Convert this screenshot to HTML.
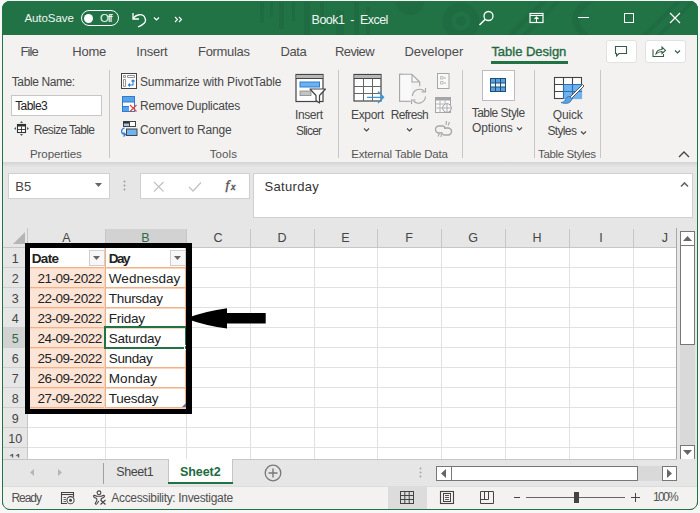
<!DOCTYPE html>
<html><head><meta charset="utf-8">
<style>
*{margin:0;padding:0;box-sizing:border-box}
html,body{width:700px;height:513px;overflow:hidden;background:#f7f7f7;font-family:"Liberation Sans",sans-serif}
.a{position:absolute}
.t{position:absolute;white-space:pre;font-family:"Liberation Sans",sans-serif}
#win{position:absolute;left:2px;top:1px;width:696px;height:509px;border-radius:8px;overflow:hidden;background:#f3f2f1;border:1px solid #217346}
svg{position:absolute;overflow:visible}
</style></head><body>
<div id="win"></div>
<!-- title bar -->
<div class="a" style="left:2px;top:1px;width:696px;height:34px;background:#217346;border-radius:8px 8px 0 0;overflow:hidden">
<svg width="696" height="34" style="left:0;top:0">
 <g fill="#1f6c42">
  <rect x="258" y="0" width="4" height="22"/><rect x="268" y="0" width="3" height="16"/><rect x="277" y="0" width="5" height="28"/>
  <rect x="290" y="0" width="3" height="20"/><rect x="302" y="0" width="6" height="34"/><rect x="318" y="0" width="4" height="26"/>
  <rect x="334" y="10" width="8" height="24"/><rect x="352" y="0" width="5" height="34"/><rect x="364" y="6" width="4" height="28"/>
  <circle cx="408" cy="0" r="14"/>
  <circle cx="459" cy="20" r="14" fill="none" stroke="#1f6c42" stroke-width="9"/>
  <circle cx="459" cy="20" r="5"/>
  <path d="M505 34 L545 -6 L552 -6 L512 34Z"/><path d="M520 34 L560 -6 L565 -6 L525 34Z"/>
  <path d="M640 34 L680 -6 L686 -6 L646 34Z"/><path d="M655 34 L695 -6 L700 -6 L660 34Z"/>
  <path d="M590 -2 Q560 16 585 36" fill="none" stroke="#1f6c42" stroke-width="7"/>
 </g>
</svg>
</div>
<!-- toggle -->
<div class="a" style="left:81px;top:10px;width:38px;height:16px;border:1.3px solid #fff;border-radius:8px"></div>
<div class="a" style="left:84px;top:14px;width:9px;height:9px;background:#fff;border-radius:50%"></div>
<!-- undo icon -->
<svg width="20" height="20" style="left:130px;top:9px"><path d="M3 4 L3 10 L9 10 M3 10 C6 5 13 4 15 9 C17 13 13 16 8 18" fill="none" stroke="#fff" stroke-width="1.3"/></svg>
<svg width="8" height="6" style="left:153px;top:16px"><path d="M1 1.5 L3.5 4 L6 1.5" fill="none" stroke="#fff" stroke-width="1.2"/></svg>
<svg width="10" height="8" style="left:174px;top:16px"><path d="M1 1 L3.5 3.5 L1 6 M5 1 L7.5 3.5 L5 6" fill="none" stroke="#fff" stroke-width="1.1"/></svg>
<!-- search -->
<svg width="18" height="18" style="left:478px;top:10px"><circle cx="10.5" cy="6" r="4.5" fill="none" stroke="#fff" stroke-width="1.3"/><path d="M7.3 9.2 L1.5 15" stroke="#fff" stroke-width="1.5"/></svg>
<!-- ribbon display -->
<svg width="16" height="12" style="left:529px;top:12px"><rect x="1" y="1.5" width="13" height="9" fill="none" stroke="#fff" stroke-width="1.2"/><path d="M1 3.5 H14 M7.5 10 V5 M5.5 7 L7.5 5 L9.5 7" fill="none" stroke="#fff" stroke-width="1.1"/></svg>
<div class="a" style="left:578px;top:17px;width:11px;height:1.2px;background:#fff"></div>
<div class="a" style="left:624px;top:13px;width:10px;height:10px;border:1.2px solid #fff"></div>
<svg width="12" height="12" style="left:669px;top:12px"><path d="M1 1 L11 11 M11 1 L1 11" stroke="#fff" stroke-width="1.2"/></svg>

<!-- tab underline -->
<div class="a" style="left:491px;top:61px;width:77px;height:3px;background:#217346"></div>
<!-- comment & share buttons -->
<div class="a" style="left:606px;top:40px;width:31px;height:23px;background:#fff;border:1px solid #e1e1e1;border-radius:3px"></div>
<svg width="14" height="12" style="left:614px;top:45px"><path d="M1.5 1.5 H12.5 V8.5 H5 L2.5 11 V8.5 H1.5 Z" fill="none" stroke="#3a5a48" stroke-width="1.1"/></svg>
<div class="a" style="left:645px;top:40px;width:41px;height:23px;background:#fff;border:1px solid #e1e1e1;border-radius:3px"></div>
<svg width="16" height="14" style="left:652px;top:45px"><path d="M1 4.5 V11.5 H11.5 V9" fill="none" stroke="#3a5a48" stroke-width="1.1"/><path d="M4 9 C4.5 6 7 4.5 10 4.5 V2 L13.5 5.5 L10 8.5 V6.5 C7.5 6.5 5.5 7.5 4 9 Z" fill="none" stroke="#3a5a48" stroke-width="1.05"/></svg>
<svg width="8" height="6" style="left:674px;top:49px"><path d="M1 1.5 L3.5 4 L6 1.5" fill="none" stroke="#3a5a48" stroke-width="1.2"/></svg>

<!-- ribbon separators -->
<div class="a" style="left:109px;top:70px;width:1px;height:88px;background:#c8c8c8"></div>
<div class="a" style="left:338px;top:70px;width:1px;height:88px;background:#c8c8c8"></div>
<div class="a" style="left:462px;top:70px;width:1px;height:88px;background:#c8c8c8"></div>
<div class="a" style="left:534px;top:70px;width:1px;height:88px;background:#c8c8c8"></div>
<div class="a" style="left:600px;top:70px;width:1px;height:88px;background:#c8c8c8"></div>
<!-- table name input -->
<div class="a" style="left:11px;top:95px;width:91px;height:21px;background:#fff;border:1px solid #c6c6c6"></div>
<!-- resize table icon -->
<svg width="18" height="18" style="left:12px;top:119px"><rect x="5.5" y="5.5" width="8" height="8" fill="#fff" stroke="#333" stroke-width="1.1"/><rect x="5.5" y="5.5" width="8" height="2" fill="#333"/><path d="M5.5 10.5 H13.5 M9.5 7.5 V13.5" stroke="#333" stroke-width="0.9"/><path d="M9.5 2 L8 4 H11Z M9.5 17 L8 15 H11Z M2 9.5 L4 8 V11Z M17 9.5 L15 8 V11Z" fill="#3d5f80"/></svg>
<!-- summarize icon -->
<svg width="17" height="17" style="left:121px;top:73px"><rect x="0.5" y="0.5" width="15" height="15" fill="#fff" stroke="#444" stroke-width="1"/><path d="M2.5 2.5 H4.5 V4.5 H2.5Z M6.5 2.5 H13.5 V4.5 H6.5Z M2.5 6.5 H4.5 V13.5 H2.5Z" fill="#fff" stroke="#8a8a8a" stroke-width="0.9"/><path d="M12 7 V12 H7.5 M9 10.5 L7.5 12 L9 13.5 M10.5 8.5 L12 7 L13.5 8.5" fill="none" stroke="#2b7cd3" stroke-width="1.1"/></svg>
<!-- remove duplicates icon -->
<svg width="17" height="17" style="left:121px;top:96px"><rect x="1.5" y="0.5" width="12" height="15" fill="#fff" stroke="#2b7cd3" stroke-width="1"/><rect x="2" y="1" width="11" height="5" fill="#5aa3e6"/><rect x="2" y="11" width="6" height="4" fill="#5aa3e6"/><path d="M1.5 6 H13.5 M1.5 10.5 H8" stroke="#2b7cd3" stroke-width="1"/><path d="M9 9 L15.5 15.5 M15.5 9 L9 15.5" stroke="#e0463a" stroke-width="1.2"/></svg>
<!-- convert to range icon -->
<svg width="18" height="17" style="left:120px;top:120px"><rect x="3.5" y="1.5" width="6" height="5" fill="#9cc8f0" stroke="#444" stroke-width="1"/><rect x="3.5" y="1.5" width="6" height="2" fill="#2f2f2f"/><rect x="9.5" y="1.5" width="6" height="5" fill="#fff" stroke="#444" stroke-width="1"/><rect x="6.5" y="9" width="10.5" height="6.5" fill="#6fb3f0" stroke="#444" stroke-width="1"/><path d="M4.5 8 C0.5 9 0.5 14 5 14.5 M3.5 12.5 L5.5 14.5 L3.5 16.5" fill="none" stroke="#2b7cd3" stroke-width="1.2"/></svg>
<!-- insert slicer icon -->
<svg width="34" height="34" style="left:294px;top:72px"><rect x="2" y="2.5" width="27" height="27" fill="#fff" stroke="#444" stroke-width="1.2"/><rect x="2.6" y="3" width="25.8" height="3.6" fill="#b8b8b8"/><path d="M2 6.5 H29" stroke="#444" stroke-width="1"/><rect x="6" y="10" width="19.5" height="5" fill="#6cb2f0" stroke="#2b7cd3" stroke-width="1"/><rect x="6" y="19" width="11" height="4.6" fill="#c4c4c4" stroke="#888" stroke-width="0.8"/><path d="M16 17 H31.5 L25.5 23.5 V31 L22 28.5 V23.5 Z" fill="#fff" stroke="#444" stroke-width="1.2" stroke-linejoin="round"/></svg>
<!-- export icon -->
<svg width="34" height="34" style="left:352px;top:72px"><rect x="2" y="2.5" width="27" height="26.5" fill="#fff" stroke="#444" stroke-width="1.2"/><rect x="2.6" y="3" width="25.8" height="3.6" fill="#b8b8b8"/><path d="M2 6.5 H29" stroke="#444" stroke-width="1"/><path d="M2 14.5 H29 M2 21.5 H29 M11.5 6.5 V29 M20.5 6.5 V29" stroke="#666" stroke-width="1"/><path d="M15 25.3 H31 M26 19.5 L31.6 25.3 L26 31" fill="none" stroke="#3a96d9" stroke-width="1.3"/></svg>
<svg width="8" height="6" style="left:363px;top:127px"><path d="M1 1.5 L3.5 4 L6 1.5" fill="none" stroke="#444" stroke-width="1.1"/></svg>
<!-- refresh icon (disabled) -->
<svg width="32" height="32" style="left:394px;top:70px"><path d="M16 16.5 V12 L8.2 4.3 H5.6 V31.3 H16.3" fill="#f9f9f9" stroke="#a6a6a6" stroke-width="1.1"/><path d="M18 4.3 H5.6 V31.3 H16.3 M18 4.3 L25.7 12 V16.3 M18 4.3 V12 H25.7" fill="#f9f9f9" stroke="#a6a6a6" stroke-width="1.1"/><path d="M18.5 26.1 A7 7 0 0 1 30.5 21.5 M31.5 26.5 A7 7 0 0 1 19.5 31" fill="none" stroke="#a6a6a6" stroke-width="1.1"/><path d="M31.5 18 V22 H27.5 M17.5 34 V30 H21.5" fill="none" stroke="#a6a6a6" stroke-width="1.1"/></svg>
<svg width="8" height="6" style="left:406px;top:127px"><path d="M1 1.5 L3.5 4 L6 1.5" fill="none" stroke="#444" stroke-width="1.1"/></svg>
<!-- small disabled icons -->
<svg width="14" height="17" style="left:437px;top:73px"><rect x="0.5" y="0.5" width="11.5" height="15" fill="#f9f9f9" stroke="#a6a6a6"/><path d="M3.5 3.5 H6 V6 H3.5Z M3.5 8.5 H6 V11 H3.5Z" fill="none" stroke="#b0b0b0" stroke-width="0.8"/><path d="M6.5 5 H9 M6.5 10 H9" stroke="#b0b0b0"/></svg>
<svg width="18" height="17" style="left:435px;top:97px"><rect x="0.5" y="0.5" width="15" height="15" fill="#f9f9f9" stroke="#a6a6a6"/><rect x="0.5" y="0.5" width="15" height="3" fill="#a6a6a6"/><path d="M0.5 7 H9 M0.5 11 H8 M5 3.5 V15.5 M10 3.5 V7" stroke="#b5b5b5"/><circle cx="12" cy="11" r="4.3" fill="#f9f9f9" stroke="#a0a0a0"/><path d="M7.7 11 H16.3 M12 6.7 V15.3" stroke="#a0a0a0" stroke-width="0.8"/></svg>
<svg width="18" height="17" style="left:435px;top:120px"><path d="M6 13 H4 A3.5 3.5 0 0 1 4 6 H8 A3.5 3.5 0 0 1 10.5 9" fill="none" stroke="#a6a6a6" stroke-width="1.4"/><path d="M9 8 H13 A3.5 3.5 0 0 1 13 15 H9 A3.5 3.5 0 0 1 6.5 12" fill="none" stroke="#a6a6a6" stroke-width="1.4"/><path d="M11.5 1 L11 5 M14.5 2 L13 5.5 M3 16.5 L4.5 13.5 M6 17 L6.5 14" stroke="#a6a6a6" stroke-width="1.1"/></svg>
<!-- table style options -->
<div class="a" style="left:482px;top:70px;width:33px;height:31px;background:#fff;border:1px solid #bcbcbc"></div>
<svg width="17" height="14" style="left:490px;top:78px"><rect x="0.5" y="0.5" width="15" height="13" fill="#e8f4fc" stroke="#1f4e79"/><rect x="1" y="1" width="14" height="4" fill="#5ba3e0"/><rect x="1" y="9" width="14" height="4" fill="#5ba3e0"/><path d="M0.5 5 H15.5 M0.5 9 H15.5 M5.5 0.5 V13.5 M10.5 0.5 V13.5" stroke="#1f4e79"/></svg>
<svg width="8" height="6" style="left:516px;top:126px"><path d="M1 1.5 L3.5 4 L6 1.5" fill="none" stroke="#444" stroke-width="1.1"/></svg>
<!-- quick styles -->
<svg width="34" height="30" style="left:553px;top:76px"><rect x="1.5" y="1.5" width="27" height="21" fill="#fff" stroke="#444" stroke-width="1.1"/><rect x="10" y="8" width="19" height="15" fill="#6fb3f0"/><path d="M1.5 8.5 H28.5 M1.5 15.5 H28.5 M10.5 1.5 V22.5 M19.5 1.5 V22.5" stroke="#444" stroke-width="1.1"/><path d="M10.5 8.5 H28.5 M10.5 15.5 H28.5 M19.5 8.5 V22.5 M10.5 8.5 V22.5" stroke="#2a6fb5" stroke-width="1"/><path d="M31 10 L18.5 22.5 L17 21 L29.5 8.5 Z" fill="#fff" stroke="#555" stroke-width="1"/><path d="M17 20.5 C13 20 12.5 24 11.5 25 C10.5 26 9 26.5 8 26.5 C12 28 17.5 28 19 23 Z" fill="#5ba3e0" stroke="#2a6fb5" stroke-width="0.8"/></svg>
<svg width="8" height="6" style="left:580px;top:130px"><path d="M1 1.5 L3.5 4 L6 1.5" fill="none" stroke="#444" stroke-width="1.1"/></svg>
<!-- collapse caret -->
<svg width="12" height="8" style="left:678px;top:151px"><path d="M1 6 L6 1 L11 6" fill="none" stroke="#444" stroke-width="1.3"/></svg>

<!-- formula area -->
<div class="a" style="left:3px;top:162px;width:694px;height:66px;background:#e6e6e6"></div>
<div class="a" style="left:3px;top:162px;width:694px;height:5px;background:linear-gradient(#d4d4d4,#e6e6e6)"></div>
<div class="a" style="left:8px;top:173px;width:102px;height:26px;background:#fff;border:1px solid #d0d0d0"></div>
<svg width="8" height="5" style="left:95px;top:183px"><path d="M0 0 H7 L3.5 4Z" fill="#666"/></svg>
<svg width="4" height="12" style="left:123px;top:180px"><circle cx="1.5" cy="1.5" r="0.9" fill="#999"/><circle cx="1.5" cy="5.5" r="0.9" fill="#999"/><circle cx="1.5" cy="9.5" r="0.9" fill="#999"/></svg>
<div class="a" style="left:140px;top:173px;width:110px;height:26px;background:#fff;border:1px solid #d0d0d0"></div>
<svg width="12" height="12" style="left:153px;top:181px"><path d="M1 1 L10.5 10.5 M10.5 1 L1 10.5" stroke="#c2c2c2" stroke-width="1.2"/></svg>
<svg width="14" height="12" style="left:188px;top:181px"><path d="M1 6 L5 10 L13 1.5" fill="none" stroke="#c2c2c2" stroke-width="1.3"/></svg>
<svg width="16" height="14" style="left:224px;top:179px"><text x="1.5" y="10" font-family="Liberation Serif" font-style="italic" font-size="13.5" fill="#555" stroke="#555" stroke-width="0.45">f</text><text x="7" y="10.5" font-family="Liberation Serif" font-style="italic" font-size="10" fill="#555" stroke="#555" stroke-width="0.45">x</text></svg>
<div class="a" style="left:253px;top:173px;width:440px;height:45px;background:#fff;border:1px solid #d0d0d0"></div>
<svg width="10" height="7" style="left:680px;top:181px"><path d="M1 5.5 L4.5 2 L8 5.5" fill="none" stroke="#666" stroke-width="1.6"/></svg>

<!-- column header row -->
<div class="a" style="left:3px;top:228px;width:676px;height:20px;background:#e6e6e6"></div>
<div class="a" style="left:105px;top:229px;width:81px;height:19px;background:#d2d2d2"></div>
<svg width="14" height="14" style="left:12px;top:232px"><path d="M13 0 V12 H1 Z" fill="#b5b5b5"/></svg>
<div class="a" style="left:3px;top:247px;width:676px;height:1px;background:#c6c6c6"></div>
<div class="a" style="left:105px;top:246px;width:81px;height:2px;background:#217346"></div>
<!-- row header column -->
<div class="a" style="left:3px;top:248px;width:25px;height:211px;background:#e6e6e6"></div>
<div class="a" style="left:3px;top:328px;width:25px;height:19px;background:#d2d2d2"></div>
<div class="a" style="left:27px;top:228px;width:1px;height:231px;background:#c6c6c6"></div>
<div class="a" style="left:26px;top:327px;width:2px;height:21px;background:#217346"></div>
<!-- grid -->
<div class="a" style="left:28px;top:248px;width:648px;height:211px;background:#fff"></div>
<div class="a" id="grid" style="left:0;top:0"></div>
<div class="a" style="left:28px;top:267px;width:648px;height:1px;background:#e1e1e1"></div>
<div class="a" style="left:28px;top:287px;width:648px;height:1px;background:#e1e1e1"></div>
<div class="a" style="left:28px;top:307px;width:648px;height:1px;background:#e1e1e1"></div>
<div class="a" style="left:28px;top:327px;width:648px;height:1px;background:#e1e1e1"></div>
<div class="a" style="left:28px;top:347px;width:648px;height:1px;background:#e1e1e1"></div>
<div class="a" style="left:28px;top:367px;width:648px;height:1px;background:#e1e1e1"></div>
<div class="a" style="left:28px;top:387px;width:648px;height:1px;background:#e1e1e1"></div>
<div class="a" style="left:28px;top:407px;width:648px;height:1px;background:#e1e1e1"></div>
<div class="a" style="left:28px;top:427px;width:648px;height:1px;background:#e1e1e1"></div>
<div class="a" style="left:28px;top:447px;width:648px;height:1px;background:#e1e1e1"></div>
<div class="a" style="left:105px;top:248px;width:1px;height:211px;background:#e1e1e1"></div>
<div class="a" style="left:186px;top:248px;width:1px;height:211px;background:#e1e1e1"></div>
<div class="a" style="left:250px;top:248px;width:1px;height:211px;background:#e1e1e1"></div>
<div class="a" style="left:314px;top:248px;width:1px;height:211px;background:#e1e1e1"></div>
<div class="a" style="left:377px;top:248px;width:1px;height:211px;background:#e1e1e1"></div>
<div class="a" style="left:441px;top:248px;width:1px;height:211px;background:#e1e1e1"></div>
<div class="a" style="left:505px;top:248px;width:1px;height:211px;background:#e1e1e1"></div>
<div class="a" style="left:569px;top:248px;width:1px;height:211px;background:#e1e1e1"></div>
<div class="a" style="left:633px;top:248px;width:1px;height:211px;background:#e1e1e1"></div>
<div class="a" style="left:3px;top:267px;width:24px;height:1px;background:#d0d0d0"></div>
<div class="a" style="left:3px;top:287px;width:24px;height:1px;background:#d0d0d0"></div>
<div class="a" style="left:3px;top:307px;width:24px;height:1px;background:#d0d0d0"></div>
<div class="a" style="left:3px;top:327px;width:24px;height:1px;background:#d0d0d0"></div>
<div class="a" style="left:3px;top:347px;width:24px;height:1px;background:#d0d0d0"></div>
<div class="a" style="left:3px;top:367px;width:24px;height:1px;background:#d0d0d0"></div>
<div class="a" style="left:3px;top:387px;width:24px;height:1px;background:#d0d0d0"></div>
<div class="a" style="left:3px;top:407px;width:24px;height:1px;background:#d0d0d0"></div>
<div class="a" style="left:3px;top:427px;width:24px;height:1px;background:#d0d0d0"></div>
<div class="a" style="left:3px;top:447px;width:24px;height:1px;background:#d0d0d0"></div>
<div class="a" style="left:105px;top:229px;width:1px;height:18px;background:#c6c6c6"></div>
<div class="a" style="left:186px;top:229px;width:1px;height:18px;background:#c6c6c6"></div>
<div class="a" style="left:250px;top:229px;width:1px;height:18px;background:#c6c6c6"></div>
<div class="a" style="left:314px;top:229px;width:1px;height:18px;background:#c6c6c6"></div>
<div class="a" style="left:377px;top:229px;width:1px;height:18px;background:#c6c6c6"></div>
<div class="a" style="left:441px;top:229px;width:1px;height:18px;background:#c6c6c6"></div>
<div class="a" style="left:505px;top:229px;width:1px;height:18px;background:#c6c6c6"></div>
<div class="a" style="left:569px;top:229px;width:1px;height:18px;background:#c6c6c6"></div>
<div class="a" style="left:633px;top:229px;width:1px;height:18px;background:#c6c6c6"></div>
<div class="a" style="left:28px;top:268px;width:77px;height:140px;background:#fce4d6"></div>
<div class="a" style="left:28px;top:267px;width:158px;height:1px;background:#f4b084"></div>
<div class="a" style="left:28px;top:268px;width:158px;height:1px;background:#f9d5bd"></div>
<div class="a" style="left:28px;top:287px;width:158px;height:1px;background:#f4b084"></div>
<div class="a" style="left:28px;top:288px;width:158px;height:1px;background:#f9d5bd"></div>
<div class="a" style="left:28px;top:307px;width:158px;height:1px;background:#f4b084"></div>
<div class="a" style="left:28px;top:308px;width:158px;height:1px;background:#f9d5bd"></div>
<div class="a" style="left:28px;top:327px;width:158px;height:1px;background:#f4b084"></div>
<div class="a" style="left:28px;top:328px;width:158px;height:1px;background:#f9d5bd"></div>
<div class="a" style="left:28px;top:347px;width:158px;height:1px;background:#f4b084"></div>
<div class="a" style="left:28px;top:348px;width:158px;height:1px;background:#f9d5bd"></div>
<div class="a" style="left:28px;top:367px;width:158px;height:1px;background:#f4b084"></div>
<div class="a" style="left:28px;top:368px;width:158px;height:1px;background:#f9d5bd"></div>
<div class="a" style="left:28px;top:387px;width:158px;height:1px;background:#f4b084"></div>
<div class="a" style="left:28px;top:388px;width:158px;height:1px;background:#f9d5bd"></div>
<div class="a" style="left:28px;top:407px;width:158px;height:1px;background:#f4b084"></div>
<div class="a" style="left:28px;top:408px;width:158px;height:1px;background:#f9d5bd"></div>
<div class="a" style="left:105px;top:248px;width:1px;height:160px;background:#f4b084"></div>
<div class="a" style="left:104px;top:248px;width:1px;height:160px;background:#f9d5bd"></div>
<div class="a" style="left:185px;top:248px;width:1px;height:160px;background:#f4b084"></div>
<div class="a" style="left:89px;top:250px;width:16px;height:16px;background:#f7f7f7;border:1px solid #cfcfcf"></div>
<svg width="8" height="5" style="left:93px;top:256px"><path d="M0 0 H7 L3.5 4Z" fill="#666"/></svg>
<div class="a" style="left:170px;top:250px;width:16px;height:16px;background:#f7f7f7;border:1px solid #cfcfcf"></div>
<svg width="8" height="5" style="left:174px;top:256px"><path d="M0 0 H7 L3.5 4Z" fill="#666"/></svg>
<div class="a" style="left:104px;top:326px;width:83px;height:23px;border:2px solid #217346"></div>
<div class="a" style="left:184px;top:345px;width:5px;height:5px;background:#217346;border:1px solid #fff"></div>
<svg width="5" height="5" style="left:182px;top:403px"><path d="M4 0 V4 H0Z" fill="#5a6fb0"/></svg>
<!-- right edge of grid -->
<div class="a" style="left:676px;top:228px;width:1px;height:231px;background:#a8a8a8"></div>
<div class="a" style="left:677px;top:228px;width:20px;height:231px;background:#e6e6e6"></div>
<!-- vscroll -->
<div class="a" style="left:680px;top:231px;width:15px;height:15px;background:#fff;border:1px solid #777"></div>
<svg width="9" height="5" style="left:683px;top:236px"><path d="M0 5 H9 L4.5 0Z" fill="#666"/></svg>
<div class="a" style="left:680px;top:245px;width:15px;height:200px;background:#d9d9d9"></div>
<div class="a" style="left:680px;top:245px;width:15px;height:100px;background:#fff;border:1px solid #777"></div>
<div class="a" style="left:680px;top:445px;width:15px;height:15px;background:#fff;border:1px solid #777"></div>
<svg width="9" height="5" style="left:683px;top:450px"><path d="M0 0 H9 L4.5 5Z" fill="#666"/></svg>

<!-- sheet tab bar -->
<div class="a" style="left:3px;top:459px;width:694px;height:27px;background:#e6e6e6"></div>
<div class="a" style="left:3px;top:459px;width:674px;height:1px;background:#c6c6c6"></div>
<svg width="5" height="8" style="left:30px;top:469px"><path d="M4 0 V7 L0 3.5Z" fill="#b5b5b5"/></svg>
<svg width="5" height="8" style="left:58px;top:469px"><path d="M0 0 V7 L4 3.5Z" fill="#b5b5b5"/></svg>
<div class="a" style="left:103px;top:463px;width:1px;height:21px;background:#a0a0a0"></div>
<div class="a" style="left:168px;top:459px;width:65px;height:25px;background:#fff;border-left:1px solid #c6c6c6;border-right:1px solid #c6c6c6"></div>
<div class="a" style="left:168px;top:482px;width:65px;height:2px;background:#217346"></div>
<svg width="18" height="18" style="left:264px;top:464px"><circle cx="9" cy="9" r="7.8" fill="none" stroke="#777" stroke-width="1.3"/><path d="M9 4.5 V13.5 M4.5 9 H13.5" stroke="#777" stroke-width="1.4"/></svg>
<svg width="4" height="12" style="left:419px;top:467px"><circle cx="1.5" cy="1.5" r="0.9" fill="#a0a0a0"/><circle cx="1.5" cy="5.5" r="0.9" fill="#a0a0a0"/><circle cx="1.5" cy="9.5" r="0.9" fill="#a0a0a0"/></svg>
<div class="a" style="left:436px;top:466px;width:241px;height:15px;background:#d9d9d9"></div>
<div class="a" style="left:436px;top:466px;width:16px;height:15px;background:#fff;border:1px solid #777"></div>
<svg width="5" height="9" style="left:441px;top:469px"><path d="M5 0 V9 L0 4.5Z" fill="#666"/></svg>
<div class="a" style="left:451px;top:466px;width:187px;height:15px;background:#fff;border:1px solid #777"></div>
<div class="a" style="left:662px;top:466px;width:15px;height:15px;background:#fff;border:1px solid #777"></div>
<svg width="5" height="9" style="left:667px;top:469px"><path d="M0 0 V9 L5 4.5Z" fill="#666"/></svg>

<!-- status bar -->
<div class="a" style="left:3px;top:486px;width:694px;height:23px;background:#f3f2f1"></div>
<div class="a" style="left:3px;top:486px;width:694px;height:1px;background:#dcdcdc"></div>
<svg width="16" height="14" style="left:60px;top:491px"><path d="M7 12.5 H1.5 V1.5 H13.5 V6" fill="none" stroke="#444" stroke-width="1.1"/><path d="M1.5 3.5 H13.5" stroke="#444" stroke-width="1.1"/><path d="M3.5 6.5 H6 M3.5 8.5 H6 M3.5 10.5 H6" stroke="#555" stroke-width="0.9"/><circle cx="10.5" cy="9.2" r="3.6" fill="#f3f3f3" stroke="#444" stroke-width="1.05"/><circle cx="10.5" cy="9.2" r="1.5" fill="#444"/></svg>
<svg width="16" height="15" style="left:92px;top:490px"><circle cx="7" cy="2.8" r="1.9" fill="none" stroke="#444" stroke-width="1.1"/><path d="M1.8 5.5 C3 4.8 4 6.5 5.2 6.2 H8.8 C10 6.5 11 4.8 12.2 5.5 C13 6.2 12 7.5 10.5 8 L9.2 8.6 V10 M4.8 8.6 L3.5 8 C2 7.5 1 6.2 1.8 5.5 M4.8 8.6 V10.5 L3.2 13.5 C3.5 14.5 4.5 14.5 5 13.8 L6.8 11" fill="none" stroke="#444" stroke-width="1.05"/><path d="M8.5 10 L13.5 14.5 M13.5 10 L8.5 14.5" stroke="#444" stroke-width="1.1"/></svg>
<div class="a" style="left:388px;top:486px;width:39px;height:23px;background:#dcdcdc"></div>
<svg width="15" height="14" style="left:400px;top:491px"><rect x="0.5" y="0.5" width="13" height="12" fill="none" stroke="#444"/><path d="M0.5 4.5 H13.5 M0.5 8.5 H13.5 M4.8 0.5 V12.5 M9.2 0.5 V12.5" stroke="#444"/></svg>
<svg width="15" height="14" style="left:440px;top:491px"><rect x="0.5" y="0.5" width="13" height="12" fill="none" stroke="#444" stroke-width="1.1"/><rect x="3.5" y="2.5" width="7" height="8" fill="none" stroke="#444"/><path d="M5 4.5 H9 M5 6.5 H9 M5 8.5 H9" stroke="#444" stroke-width="0.9"/></svg>
<svg width="15" height="14" style="left:480px;top:491px"><path d="M0.5 0.5 H13.5 V12.5 H0.5 Z M0.5 8.5 H8.5 V0.5 M4.5 0.5 V8.5" fill="none" stroke="#444"/></svg>
<div class="a" style="left:514px;top:497px;width:6px;height:1px;background:#444"></div>
<div class="a" style="left:526px;top:497px;width:99px;height:1px;background:#666"></div>
<div class="a" style="left:574px;top:492px;width:5px;height:11px;background:#444"></div>
<svg width="9" height="9" style="left:631px;top:493px"><path d="M4.5 0 V9 M0 4.5 H9" stroke="#444" stroke-width="1"/></svg>

<!-- black annotation box -->
<div class="a" style="left:25px;top:243px;width:167px;height:171px;border:5px solid #000;border-right-width:6px"></div>
<!-- arrow -->
<svg width="90" height="30" style="left:180px;top:303px"><path d="M5.5 15.6 Q26 8 47 5.3 V9.9 H85.7 V20.6 H47 V25.6 Q26 23 5.5 15.6 Z" fill="#000"/></svg>

<div class="t" style="left:24.40px;top:13.27px;font-size:11.5px;line-height:11.5px;letter-spacing:-0.057px;color:#f2f7f3;">AutoSave</div>
<div class="t" style="left:100.00px;top:13.27px;font-size:11.5px;line-height:11.5px;letter-spacing:-1.250px;color:#f2f7f3;">Off</div>
<div class="t" style="left:311.60px;top:13.72px;font-size:12.5px;line-height:12.5px;letter-spacing:-0.521px;color:#f2f7f3;">Book1  -  Excel</div>
<div class="t" style="left:20.60px;top:45.00px;font-size:13px;line-height:13px;letter-spacing:-0.967px;color:#4d4d4d;">File</div>
<div class="t" style="left:72.30px;top:45.00px;font-size:13px;line-height:13px;letter-spacing:-0.233px;color:#4d4d4d;">Home</div>
<div class="t" style="left:136.30px;top:45.00px;font-size:13px;line-height:13px;letter-spacing:-0.220px;color:#4d4d4d;">Insert</div>
<div class="t" style="left:198.00px;top:45.00px;font-size:13px;line-height:13px;letter-spacing:-0.314px;color:#4d4d4d;">Formulas</div>
<div class="t" style="left:280.50px;top:45.00px;font-size:13px;line-height:13px;letter-spacing:-0.400px;color:#4d4d4d;">Data</div>
<div class="t" style="left:335.00px;top:45.00px;font-size:13px;line-height:13px;letter-spacing:-0.600px;color:#4d4d4d;">Review</div>
<div class="t" style="left:404.40px;top:45.00px;font-size:13px;line-height:13px;letter-spacing:-0.050px;color:#4d4d4d;">Developer</div>
<div class="t" style="left:491.40px;top:45.00px;font-size:13px;line-height:13px;letter-spacing:-0.018px;color:#1e6b41;-webkit-text-stroke:0.35px #1e6b41;">Table Design</div>
<div class="t" style="left:11.75px;top:75.59px;font-size:12px;line-height:12px;letter-spacing:-0.395px;color:#474747;">Table Name:</div>
<div class="t" style="left:15.20px;top:100.04px;font-size:12px;line-height:12px;letter-spacing:-0.570px;color:#222;">Table3</div>
<div class="t" style="left:33.80px;top:123.59px;font-size:12px;line-height:12px;letter-spacing:-0.664px;color:#474747;">Resize Table</div>
<div class="t" style="left:30.00px;top:148.57px;font-size:11.5px;line-height:11.5px;letter-spacing:-0.078px;color:#555;">Properties</div>
<div class="t" style="left:139.90px;top:75.84px;font-size:12px;line-height:12px;letter-spacing:-0.100px;color:#474747;">Summarize with PivotTable</div>
<div class="t" style="left:140.00px;top:99.74px;font-size:12px;line-height:12px;letter-spacing:-0.238px;color:#474747;">Remove Duplicates</div>
<div class="t" style="left:140.00px;top:123.64px;font-size:12px;line-height:12px;letter-spacing:-0.153px;color:#474747;">Convert to Range</div>
<div class="t" style="left:209.70px;top:148.57px;font-size:11.5px;line-height:11.5px;letter-spacing:0.125px;color:#555;">Tools</div>
<div class="t" style="left:295.00px;top:109.24px;font-size:12px;line-height:12px;letter-spacing:-0.400px;color:#474747;">Insert</div>
<div class="t" style="left:296.00px;top:124.84px;font-size:12px;line-height:12px;letter-spacing:-0.800px;color:#474747;">Slicer</div>
<div class="t" style="left:351.00px;top:109.24px;font-size:12px;line-height:12px;letter-spacing:-0.340px;color:#474747;">Export</div>
<div class="t" style="left:390.70px;top:109.24px;font-size:12px;line-height:12px;letter-spacing:-0.667px;color:#474747;">Refresh</div>
<div class="t" style="left:351.20px;top:148.57px;font-size:11.5px;line-height:11.5px;letter-spacing:-0.189px;color:#555;">External Table Data</div>
<div class="t" style="left:471.70px;top:106.84px;font-size:12px;line-height:12px;letter-spacing:-0.520px;color:#474747;">Table Style</div>
<div class="t" style="left:472.10px;top:122.24px;font-size:12px;line-height:12px;letter-spacing:-0.117px;color:#474747;">Options</div>
<div class="t" style="left:552.80px;top:108.74px;font-size:12px;line-height:12px;letter-spacing:-0.150px;color:#474747;">Quick</div>
<div class="t" style="left:547.50px;top:124.54px;font-size:12px;line-height:12px;letter-spacing:-0.660px;color:#474747;">Styles</div>
<div class="t" style="left:538.00px;top:148.57px;font-size:11.5px;line-height:11.5px;letter-spacing:-0.364px;color:#555;">Table Styles</div>
<div class="t" style="left:15.30px;top:179.80px;font-size:13px;line-height:13px;letter-spacing:0.000px;color:#444;">B5</div>
<div class="t" style="left:264.50px;top:180.30px;font-size:13px;line-height:13px;letter-spacing:0.314px;color:#333;">Saturday</div>
<div class="t" style="left:62.30px;top:231.92px;font-size:12.5px;line-height:12.5px;letter-spacing:0.000px;color:#444;">A</div>
<div class="t" style="left:141.35px;top:231.92px;font-size:12.5px;line-height:12.5px;letter-spacing:0.000px;color:#2a6b48;">B</div>
<div class="t" style="left:213.50px;top:231.92px;font-size:12.5px;line-height:12.5px;letter-spacing:0.000px;color:#444;">C</div>
<div class="t" style="left:277.50px;top:231.92px;font-size:12.5px;line-height:12.5px;letter-spacing:0.000px;color:#444;">D</div>
<div class="t" style="left:341.35px;top:231.92px;font-size:12.5px;line-height:12.5px;letter-spacing:0.000px;color:#444;">E</div>
<div class="t" style="left:405.20px;top:231.92px;font-size:12.5px;line-height:12.5px;letter-spacing:0.000px;color:#444;">F</div>
<div class="t" style="left:468.15px;top:231.92px;font-size:12.5px;line-height:12.5px;letter-spacing:0.000px;color:#444;">G</div>
<div class="t" style="left:532.50px;top:231.92px;font-size:12.5px;line-height:12.5px;letter-spacing:0.000px;color:#444;">H</div>
<div class="t" style="left:599.25px;top:231.92px;font-size:12.5px;line-height:12.5px;letter-spacing:0.000px;color:#444;">I</div>
<div class="t" style="left:661.85px;top:231.92px;font-size:12.5px;line-height:12.5px;letter-spacing:0.000px;color:#444;">J</div>
<div class="t" style="left:11.70px;top:252.92px;font-size:12.5px;line-height:12.5px;letter-spacing:0.000px;color:#444;">1</div>
<div class="t" style="left:11.70px;top:272.92px;font-size:12.5px;line-height:12.5px;letter-spacing:0.000px;color:#444;">2</div>
<div class="t" style="left:11.70px;top:292.92px;font-size:12.5px;line-height:12.5px;letter-spacing:0.000px;color:#444;">3</div>
<div class="t" style="left:11.70px;top:312.92px;font-size:12.5px;line-height:12.5px;letter-spacing:0.000px;color:#444;">4</div>
<div class="t" style="left:11.70px;top:332.92px;font-size:12.5px;line-height:12.5px;letter-spacing:0.000px;color:#2a6b48;">5</div>
<div class="t" style="left:11.70px;top:352.92px;font-size:12.5px;line-height:12.5px;letter-spacing:0.000px;color:#444;">6</div>
<div class="t" style="left:11.70px;top:372.92px;font-size:12.5px;line-height:12.5px;letter-spacing:0.000px;color:#444;">7</div>
<div class="t" style="left:11.70px;top:392.92px;font-size:12.5px;line-height:12.5px;letter-spacing:0.000px;color:#444;">8</div>
<div class="t" style="left:11.70px;top:412.92px;font-size:12.5px;line-height:12.5px;letter-spacing:0.000px;color:#444;">9</div>
<div class="t" style="left:8.25px;top:432.92px;font-size:12.5px;line-height:12.5px;letter-spacing:0.000px;color:#444;">10</div>
<div class="t" style="left:8.70px;top:452.92px;font-size:12.5px;line-height:12.5px;letter-spacing:0.000px;color:#444;clip-path:inset(0 0 8px 0);">11</div>
<div class="t" style="left:31.80px;top:251.97px;font-size:13.5px;line-height:13.5px;letter-spacing:-0.700px;color:#222;font-weight:bold;">Date</div>
<div class="t" style="left:108.80px;top:251.97px;font-size:13.5px;line-height:13.5px;letter-spacing:-1.500px;color:#222;font-weight:bold;">Day</div>
<div class="t" style="left:37.60px;top:272.17px;font-size:13.5px;line-height:13.5px;letter-spacing:-0.500px;color:#222;">21-09-2022</div>
<div class="t" style="left:108.80px;top:272.17px;font-size:13.5px;line-height:13.5px;letter-spacing:0.063px;color:#222;">Wednesday</div>
<div class="t" style="left:37.60px;top:292.17px;font-size:13.5px;line-height:13.5px;letter-spacing:-0.500px;color:#222;">22-09-2022</div>
<div class="t" style="left:108.80px;top:292.17px;font-size:13.5px;line-height:13.5px;letter-spacing:-0.300px;color:#222;">Thursday</div>
<div class="t" style="left:37.60px;top:312.17px;font-size:13.5px;line-height:13.5px;letter-spacing:-0.500px;color:#222;">23-09-2022</div>
<div class="t" style="left:108.80px;top:312.17px;font-size:13.5px;line-height:13.5px;letter-spacing:-0.240px;color:#222;">Friday</div>
<div class="t" style="left:37.60px;top:332.17px;font-size:13.5px;line-height:13.5px;letter-spacing:-0.500px;color:#222;">24-09-2022</div>
<div class="t" style="left:108.80px;top:332.17px;font-size:13.5px;line-height:13.5px;letter-spacing:-0.271px;color:#222;">Saturday</div>
<div class="t" style="left:37.60px;top:352.17px;font-size:13.5px;line-height:13.5px;letter-spacing:-0.500px;color:#222;">25-09-2022</div>
<div class="t" style="left:108.80px;top:352.17px;font-size:13.5px;line-height:13.5px;letter-spacing:-0.380px;color:#222;">Sunday</div>
<div class="t" style="left:37.60px;top:372.17px;font-size:13.5px;line-height:13.5px;letter-spacing:-0.500px;color:#222;">26-09-2022</div>
<div class="t" style="left:108.80px;top:372.17px;font-size:13.5px;line-height:13.5px;letter-spacing:0.060px;color:#222;">Monday</div>
<div class="t" style="left:37.60px;top:392.17px;font-size:13.5px;line-height:13.5px;letter-spacing:-0.500px;color:#222;">27-09-2022</div>
<div class="t" style="left:108.80px;top:392.17px;font-size:13.5px;line-height:13.5px;letter-spacing:-0.267px;color:#222;">Tuesday</div>
<div class="t" style="left:116.30px;top:466.42px;font-size:12.5px;line-height:12.5px;letter-spacing:-0.440px;color:#444;">Sheet1</div>
<div class="t" style="left:180.00px;top:466.42px;font-size:12.5px;line-height:12.5px;letter-spacing:-0.080px;color:#1e6b41;font-weight:bold;">Sheet2</div>
<div class="t" style="left:11.40px;top:492.24px;font-size:12px;line-height:12px;letter-spacing:-1.025px;color:#505050;">Ready</div>
<div class="t" style="left:111.30px;top:491.94px;font-size:12px;line-height:12px;letter-spacing:-0.332px;color:#505050;">Accessibility: Investigate</div>
<div class="t" style="left:652.90px;top:491.44px;font-size:12px;line-height:12px;letter-spacing:-1.667px;color:#555;">100%</div>
<!-- window frame overlay -->
<div class="a" style="left:2px;top:1px;width:696px;height:509px;border-radius:8px;border:1px solid #217346;pointer-events:none"></div>
</body></html>
